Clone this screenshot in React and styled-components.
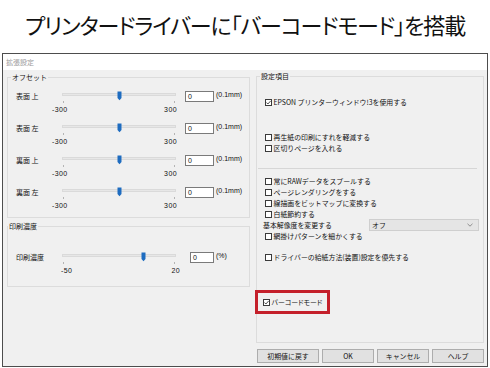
import React from 'react';
import styled, { createGlobalStyle } from 'styled-components';

const GlobalStyle = createGlobalStyle`
  html, body { margin: 0; padding: 0; background: #fff; }
  body {
    font-family: "Noto Sans CJK JP", "Noto Sans", sans-serif;
    color: #111;
  }
`;

const Page = styled.div`
  width: 490px;
  height: 368px;
  overflow: hidden;
`;

const Header = styled.h1`
  margin: 0;
  height: 53px;
  padding-bottom: 5px;
  box-sizing: border-box;
  display: flex;
  align-items: center;
  justify-content: center;
  font-size: 22px;
  font-weight: 400;
  font-feature-settings: "palt";
  letter-spacing: -1.1px;
  color: #111;
`;

const Dialog = styled.div`
  margin-left: 2px;
  width: 486px;
  height: 314px;
  box-sizing: border-box;
  border: 1px solid #4d4d4d;
  background: #f0f0f0;
  display: flex;
  flex-direction: column;
  font-size: 6.9px;
  line-height: 11px;
`;

const TitleBar = styled.div`
  flex: none;
  height: 16px;
  background: #fff;
  color: #9a9a9a;
  font-size: 7px;
  line-height: 16px;
  padding-left: 3px;
`;

const Body = styled.div`
  display: flex;
  gap: 6px;
  padding: 3px 3px 0 4px;
`;

const LeftCol = styled.div`
  width: 243px;
  display: flex;
  flex-direction: column;
  gap: 4px;
`;

const RightCol = styled.div`
  width: 228px;
  display: flex;
  flex-direction: column;
`;

const Group = styled.fieldset`
  margin: ${p => p.$mt || 0}px 0 0 0;
  padding: 0;
  border: 1px solid #dcdcdc;
  height: ${p => p.$h}px;
  box-sizing: border-box;
  min-width: 0;
`;

const Legend = styled.legend`
  margin-left: ${p => p.$inset}px;
  padding: 0 1px;
  font-size: 7px;
  line-height: 8px;
`;

const GroupContent = styled.div`
  padding-top: ${p => p.$pt}px;
`;

/* slider rows */
const SliderRow = styled.div`
  display: flex;
  align-items: flex-start;
  height: 32px;
`;

const RowLabel = styled.div`
  flex: none;
  width: 54px;
  box-sizing: border-box;
  padding-left: 8px;
  margin-top: 1.5px;
  font-size: 7px;
  line-height: 8px;
`;

const SliderBlock = styled.div`
  flex: none;
  width: 114px;
`;

const TrackArea = styled.div`
  position: relative;
  height: 10px;
`;

const Track = styled.div`
  position: relative;
  top: 2px;
  height: 3px;
  box-sizing: border-box;
  background: #e7e7e7;
  border: 1px solid #dadada;
`;

const Thumb = styled.svg`
  position: absolute;
  top: 0;
  margin-left: -2.5px;
`;

const Ticks = styled.div`
  display: flex;
  justify-content: space-between;
  height: 2px;
  padding: 0 1px;
`;

const Tick = styled.span`
  width: 1px;
  background: #b4b4b4;
`;

const Numbers = styled.div`
  display: flex;
  justify-content: space-between;
  margin: 3px ${p => p.$right}px 0 ${p => p.$left}px;
  font-family: "Liberation Sans", Arial, sans-serif;
  font-size: 7px;
  line-height: 8px;
  letter-spacing: 0.4px;
`;

const ValueBox = styled.div`
  flex: none;
  margin: 0.5px 0 0 ${p => p.$ml}px;
  width: ${p => p.$w}px;
  height: 11px;
  box-sizing: border-box;
  border: 1px solid #7a7a7a;
  background: #fff;
  padding-left: 2px;
  font-family: "Liberation Sans", Arial, sans-serif;
  font-size: 7px;
  line-height: 9px;
`;

const Unit = styled.div`
  margin-left: 2px;
  font-family: "Liberation Sans", Arial, sans-serif;
  font-size: 7px;
  line-height: 8px;
`;

/* right settings */
const Settings = styled.div`
  padding: 17px 0 0 8px;
  display: flex;
  flex-direction: column;
`;

const Item = styled.div`
  display: flex;
  align-items: center;
  height: 11px;
  margin-top: ${p => p.$mt || 0}px;
  white-space: nowrap;
`;

const BoxIcon = styled.svg`
  flex: none;
  margin-right: 1.5px;
`;

const Separator = styled.div`
  height: 1px;
  background: #d6d6d6;
  margin: 14px 6px 0 -7px;
`;

const SelectRow = styled.div`
  display: flex;
  align-items: center;
  height: 12px;
  margin: -1px 0 0 -2px;
  white-space: nowrap;
`;

const Select = styled.div`
  margin-left: auto;
  margin-right: 4px;
  width: 110px;
  height: 12px;
  box-sizing: border-box;
  background: #e5e5e5;
  border: 1px solid #cfcfcf;
  display: flex;
  align-items: center;
  justify-content: space-between;
  padding: 0 5px 0 2px;
`;

const Highlight = styled.div`
  margin: 27px 0 0 -10px;
  width: 75px;
  height: 24px;
  box-sizing: border-box;
  border: 3px solid #c4202b;
  display: flex;
  align-items: center;
  padding-left: 5px;
  white-space: nowrap;
  font-feature-settings: "palt";
`;

const Buttons = styled.div`
  display: flex;
  gap: 3px;
  margin-top: 6px;
  padding-left: 1px;
`;

const Button = styled.div`
  width: ${p => p.$w}px;
  height: 14px;
  box-sizing: border-box;
  background: #e1e1e1;
  border: 1px solid #adadad;
  display: flex;
  align-items: center;
  justify-content: center;
  white-space: nowrap;
`;

function Check({ on }) {
  return (
    <BoxIcon width="7" height="7" viewBox="0 0 7 7">
      <rect x="0.5" y="0.5" width="6" height="6" fill="#fff" stroke="#3a3a3a" />
      {on && <path d="M1.4 3.5 L2.9 5 L5.7 1.9" fill="none" stroke="#3a3a3a" strokeWidth="0.9" />}
    </BoxIcon>
  );
}

function CheckItem({ on, mt, children }) {
  return (
    <Item $mt={mt}>
      <Check on={on} />
      {children}
    </Item>
  );
}

function Slider({ label, min, max, value, box, unit, nums }) {
  const pct = ((value - min) / (max - min)) * 100;
  return (
    <SliderRow>
      <RowLabel>{label}</RowLabel>
      <SliderBlock>
        <TrackArea>
          <Track />
          <Thumb width="5" height="10" viewBox="0 0 5 10" style={{ left: `${pct}%` }}>
            <path d="M0.5 0.5 H4.5 V7 L2.5 9.3 L0.5 7 Z" fill="#1e6cc0" />
          </Thumb>
        </TrackArea>
        <Ticks><Tick /><Tick /></Ticks>
        <Numbers $left={nums[0]} $right={nums[1]}>
          <span>{min}</span>
          <span>{max}</span>
        </Numbers>
      </SliderBlock>
      <ValueBox $ml={box[0]} $w={box[1]}>0</ValueBox>
      <Unit>{unit}</Unit>
    </SliderRow>
  );
}

const offsets = ['表面 上', '表面 左', '裏面 上', '裏面 左'];

export default function App() {
  return (
    <Page>
      <GlobalStyle />
      <Header>プリンタードライバーに「バーコードモード」を搭載</Header>
      <Dialog>
        <TitleBar>拡張設定</TitleBar>
        <Body>
          <LeftCol>
            <Group $h={145}>
              <Legend $inset={3}>オフセット</Legend>
              <GroupContent $pt={9.5}>
                {offsets.map(o => (
                  <Slider key={o} label={o} min={-300} max={300} value={0}
                    box={[9, 29]} unit="(0.1mm)" nums={[-10, -1]} />
                ))}
              </GroupContent>
            </Group>
            <Group $h={65}>
              <Legend $inset={0}>印刷濃度</Legend>
              <GroupContent $pt={21.5}>
                <Slider label="印刷濃度" min={-50} max={20} value={0}
                  box={[14, 24]} unit="(%)" nums={[-1, -4]} />
              </GroupContent>
            </Group>
          </LeftCol>
          <RightCol>
            <Group $h={271} $mt={-1}>
              <Legend $inset={3}>設定項目</Legend>
              <Settings>
                <CheckItem on>EPSON プリンターウィンドウ!3を使用する</CheckItem>
                <CheckItem mt={24}>再生紙の印刷にすれを軽減する</CheckItem>
                <CheckItem>区切りページを入れる</CheckItem>
                <Separator />
                <CheckItem mt={7}>常にRAWデータをスプールする</CheckItem>
                <CheckItem>ページレンダリングをする</CheckItem>
                <CheckItem>線描画をビットマップに変換する</CheckItem>
                <CheckItem>白紙節約する</CheckItem>
                <SelectRow>
                  基本解像度を変更する
                  <Select>
                    <span>オフ</span>
                    <svg width="6" height="4" viewBox="0 0 6 4">
                      <path d="M0.5 0.8 L3 3.2 L5.5 0.8" fill="none" stroke="#777" strokeWidth="0.8" />
                    </svg>
                  </Select>
                </SelectRow>
                <CheckItem>網掛けパターンを細かくする</CheckItem>
                <CheckItem mt={10}>ドライバーの給紙方法(装置)設定を優先する</CheckItem>
                <Highlight>
                  <Check on />
                  バーコードモード
                </Highlight>
              </Settings>
            </Group>
            <Buttons>
              <Button $w={62}>初期値に戻す</Button>
              <Button $w={52}>OK</Button>
              <Button $w={52}>キャンセル</Button>
              <Button $w={52}>ヘルプ</Button>
            </Buttons>
          </RightCol>
        </Body>
      </Dialog>
    </Page>
  );
}
